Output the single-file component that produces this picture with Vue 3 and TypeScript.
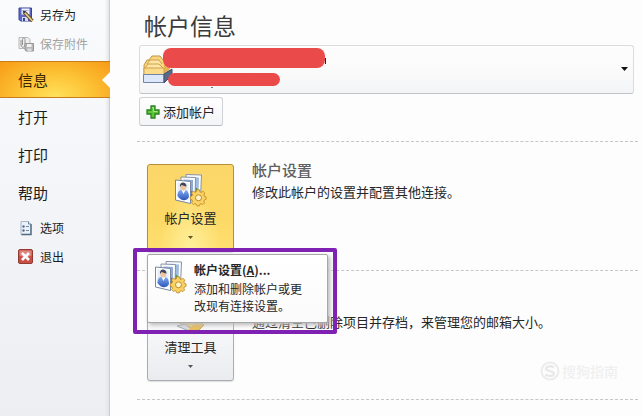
<script setup lang="ts">
import { ref } from 'vue'

type NavItem = { label: string; icon?: 'save' | 'attach' | 'options' | 'exit'; active?: boolean; disabled?: boolean }

const navItems: NavItem[] = [
  { label: '另存为', icon: 'save' },
  { label: '保存附件', icon: 'attach', disabled: true },
  { label: '信息', active: true },
  { label: '打开' },
  { label: '打印' },
  { label: '帮助' },
  { label: '选项', icon: 'options' },
  { label: '退出', icon: 'exit' },
]
const account = ref('primary')
</script>

<template>
  <div class="backstage">
    <nav class="sidebar">
      <button
        v-for="item in navItems"
        :key="item.label"
        type="button"
        class="nav-item"
        :class="{ small: item.icon, active: item.active }"
        :disabled="item.disabled"
      >
        <svg v-if="item.icon === 'save'" class="nav-icon" viewBox="0 0 16 16">
          <path d="M1 1h12.500v13H2.500L1 12.500z" fill="#5d69c4" stroke="#38439a" />
          <path d="M3.500 1.500h8v6h-8z" fill="#f1f4fd" />
          <path d="M4.500 3.500h6M4.500 5.500h5" stroke="#aab4de" />
          <path d="M4 10h6v4H4z" fill="#d5dbf1" />
          <path d="M5 11h2v3H5z" fill="#38439a" />
          <path d="M6 5l8.500 9" stroke="#65502e" stroke-width="3.400" />
          <path d="M6.500 5.500l8 8.500" stroke="#e9cd83" stroke-width="1.700" />
          <path d="M4.500 3.500l3.500 1-2 2z" fill="#33313b" />
        </svg>
        <svg v-else-if="item.icon === 'attach'" class="nav-icon" viewBox="0 0 16 16">
          <path d="M1 1.500h9l2 2v9H1z" fill="#eeeeee" stroke="#b9b9b9" />
          <path d="M3 4v5c0 3 4 3 4 0V3.500C7 1.500 4.500 1.500 4.500 3.500V9" fill="none" stroke="#929292" />
          <path d="M7 7.500h8.500V15H8l-1-1z" fill="#b8b8b8" stroke="#969696" />
          <path d="M9 8h4.500v3H9z" fill="#f2f2f2" />
          <path d="M9.500 12.500h4V15h-4z" fill="#dddddd" />
        </svg>
        <svg v-else-if="item.icon === 'options'" class="nav-icon" viewBox="0 0 16 16">
          <path d="M3 1.500h7.500l2.500 2.500v10.500H3z" fill="#eaf1f8" stroke="#a7b8ca" />
          <path d="M13 4v10.500H3.500" fill="none" stroke="#4f6985" stroke-width="1.400" />
          <path d="M10.500 1.500V4H13" fill="#ffffff" stroke="#6c849c" />
          <circle cx="5.500" cy="6.500" r="1.200" fill="#526d8b" />
          <circle cx="5.500" cy="10.500" r="1.200" fill="#526d8b" />
          <path d="M8 6.500h3M8 10.500h3" stroke="#718aa4" />
        </svg>
        <svg v-else-if="item.icon === 'exit'" class="nav-icon" viewBox="0 0 16 16">
          <rect x="0.500" y="0.500" width="14" height="14" rx="1.500" fill="#c84f44" stroke="#923b34" />
          <path d="M1.500 1.500h12v5q-6 3-12 0z" fill="#df877c" />
          <path d="M4 4l7 7M11 4l-7 7" stroke="#ffffff" stroke-width="2.600" />
        </svg>
        <span>{{ item.label }}</span>
      </button>
    </nav>

    <main class="content">
      <svg class="symbols" aria-hidden="true">
        <defs>
          <linearGradient id="shirt" x1="0" y1="0" x2="0" y2="1">
            <stop offset="0" stop-color="#82aaf0" />
            <stop offset="1" stop-color="#2955b8" />
          </linearGradient>
          <symbol id="contacts" viewBox="0 0 34 34">
            <path d="M12 1.500l15.500.5-1 23-14-2z" fill="#fafcff" stroke="#8793a2" />
            <path d="M14.500 4l10.500.5-.5 17-9-2z" fill="#9fbbe0" />
            <path d="M20 13l6 5-5 5z" fill="#438c48" />
            <path d="M7 4l14.500.5-.5 23L7 25z" fill="#fafcff" stroke="#8793a2" />
            <path d="M9.500 6.500l9.500.5v18l-9-2z" fill="#8dabd6" />
            <path d="M15 16l5 4-4 5z" fill="#c64735" />
            <path d="M1.500 7L16.500 8.500v22L1.500 27z" fill="#ffffff" stroke="#77889f" />
            <path d="M3.500 9.500l11 1v17l-11-3z" fill="#e4edf8" />
            <path d="M3.500 23c0-5 2-6 4-6h3c3 0 4.500 3 4.500 7-3 5-8 4-11.500-1z" fill="url(#shirt)" />
            <path d="M7.500 17l2 4 2-4z" fill="#ffffff" />
            <ellipse cx="9.200" cy="13.800" rx="3" ry="3.800" fill="#edc6a1" />
            <path d="M6 14c-1-6 6.500-6 6.500-.5-2 0-4-1.500-5-1.500z" fill="#40465a" />
            <g stroke="#c08a25" fill="#f9d164">
              <path d="M23 17.500h3l.7 2.500 1.500.7 2.300-1.200 2 2-1.200 2.300.7 1.500 2 .7v3l-2 .7-.7 1.500 1 2-2 2-2.200-1-1.400.6-.7 2-3-.1-.7-2-1.500-.6-2 1-2-2 1-2.100-.6-1.500-2-.7v-3l2-.7.7-1.500-1.200-2.200 2-2 2.200 1.200 1.500-.7z" transform="translate(3.500 2) scale(.84)" />
              <circle cx="24.500" cy="24.800" r="3" fill="#fff5cb" />
            </g>
          </symbol>
        </defs>
      </svg>

      <h1>帐户信息</h1>
      <div class="account-box">
        <select v-model="account" aria-label="帐户信息">
          <option value="primary"></option>
        </select>
        <svg class="account-icon" viewBox="0 0 30 30">
          <path d="M6 5l3-4h8l3 4 5 0v15H1V10l3-5z" fill="#f8d57e" stroke="#c59340" />
          <path d="M4 9l3-4h9l3 4M2 13l3-4h11l4 4" fill="#ffe6a4" stroke="#cda04b" />
          <path d="M21 4l6-1v11l-6 5z" fill="#e6b353" />
          <path d="M1 13h20v7H1z" fill="#fbdc8c" stroke="#d0a04b" />
          <path d="M.5 19.500H21v8H.5z" fill="#dce7f9" stroke="#7184a2" />
          <path d="M21 19l8-5v6l-8 8z" fill="#56698a" stroke="#44536c" />
        </svg>
        <span class="redaction wide"></span>
        <span class="redaction narrow"></span>
        <svg class="arrow" viewBox="0 0 7 4"><path d="M0 0h7L3.500 4z" fill="#111111" /></svg>
      </div>
      <button type="button" class="add-button">
        <svg viewBox="0 0 14 14">
          <path d="M5 1h4v4h4v4H9v4H5V9H1V5h4z" fill="#5cc638" stroke="#2c8023" stroke-width="1.300" />
          <path d="M6 2.500h1.500V6.500h4" fill="none" stroke="#a5e981" />
        </svg>
        <span>添加帐户</span>
      </button>

      <section class="panel">
        <button type="button" class="tile selected">
          <svg class="tile-icon"><use href="#contacts" /></svg>
          <span>帐户设置</span>
          <svg class="tile-arrow" viewBox="0 0 5 3"><path d="M0 0h5L2.500 3z" fill="#665424" /></svg>
        </button>
        <div class="description">
          <h2>帐户设置</h2>
          <p>修改此帐户的设置并配置其他连接。</p>
        </div>
        <div class="highlight">
          <button type="button" class="menu-item">
            <svg class="tile-icon"><use href="#contacts" /></svg>
            <span class="menu-text">
              <strong>帐户设置(<u>A</u>)...</strong>
              <span>添加和删除帐户或更改现有连接设置。</span>
            </span>
          </button>
        </div>
      </section>

      <section class="panel">
        <button type="button" class="tile">
          <svg class="tile-icon" viewBox="0 0 34 34">
            <path d="M6 21l10-8 14 10-9 9z" fill="#f4d177" stroke="#a98a4b" />
            <path d="M3 24l8-2 8 6-4 1z" fill="#d8dbe2" stroke="#a0a7b2" />
            <path d="M14 28l8-8 8 3-9 9z" fill="#eabe59" />
          </svg>
          <span>清理工具</span>
          <svg class="tile-arrow" viewBox="0 0 5 3"><path d="M0 0h5L2.500 3z" fill="#505762" /></svg>
        </button>
        <div class="description cleanup">
          <p>通过清空已删除项目并存档，来管理您的邮箱大小。</p>
        </div>
        <div class="watermark">
          <svg viewBox="0 0 20 20">
            <circle cx="10" cy="10" r="8.500" fill="none" stroke="#ececec" stroke-width="2" />
            <path d="M14 6.500C11 4.500 6 5 6 7.800c0 3 8 1.500 8 4.700 0 3-5.500 3-8.500 1" fill="none" stroke="#e9e9e9" stroke-width="2.400" />
          </svg>
          <span>搜狗指南</span>
        </div>
      </section>
      <div class="panel end"></div>
    </main>
  </div>
</template>

<style>
body {
  margin: 0;
  background: #fdfdfd;
}
</style>

<style scoped>
* {
  box-sizing: border-box;
}
.backstage {
  display: flex;
  min-height: 100vh;
  overflow: hidden;
  font-family: "Noto Sans CJK SC", sans-serif;
  font-size: 13px;
  line-height: 20px;
  color: #262626;
}
button {
  margin: 0;
  padding: 0;
  font: inherit;
  color: inherit;
  border: 0;
  background: none;
}
h1, h2, p {
  margin: 0;
}
svg {
  display: block;
  flex: none;
}
.sidebar {
  display: flex;
  flex: none;
  flex-direction: column;
  width: 110px;
  border-right: 1px solid #c9ccd1;
  background: linear-gradient(90deg, transparent 96%, #e3e5e9), linear-gradient(#fafbfc, #f3f5f8 45%, #eceef1);
}
.nav-item {
  display: flex;
  align-items: center;
  height: 38px;
  padding-left: 18px;
  font-size: 15px;
  color: #1c1c1c;
}
.nav-item.small {
  gap: 6px;
  height: 29px;
  font-size: 12px;
}
.nav-item:not(.small) + .small {
  margin-top: 1px;
}
.nav-item:disabled {
  color: #a3a3a3;
}
.nav-icon {
  width: 16px;
  height: 16px;
}
.nav-item.active {
  position: relative;
  height: 37px;
  margin-top: 3px;
  margin-right: -1px;
  border-top: 1px solid #c97c1b;
  border-bottom: 1px solid #c97c1b;
  background: radial-gradient(ellipse at 50% 100%, #ffe25b, #fdc437 45%, #f79b16 100%);
  color: #3d2500;
}
.nav-item.active::after {
  position: absolute;
  top: 10px;
  right: 0;
  width: 8px;
  height: 16px;
  background: #fdfdfd;
  clip-path: polygon(100% 0, 0 50%, 100% 100%);
  content: "";
}
.content {
  flex: 1;
  min-width: 0;
  padding: 9px 4px 0 27px;
}
.symbols {
  position: absolute;
  width: 0;
  height: 0;
}
h1 {
  margin: 0 0 4px 7px;
  font-size: 23px;
  font-weight: 400;
  line-height: 32px;
  color: #3b3b3b;
}
.account-box {
  position: relative;
  height: 49px;
  margin: 0 4px 3px 2px;
}
.account-box select {
  width: 100%;
  height: 100%;
  border: 1px solid #dadcdf;
  border-bottom-color: #bfc2c7;
  border-radius: 3px;
  appearance: none;
  background: linear-gradient(#fdfdfd, #fafafb 60%, #f2f4f6);
}
.account-icon {
  position: absolute;
  top: 10px;
  left: 4px;
  width: 30px;
  height: 30px;
}
.redaction {
  position: absolute;
  border-radius: 8px;
  background: #eb4a4b;
}
.redaction.wide {
  top: 3px;
  left: 24px;
  width: 162px;
  height: 20px;
}
.redaction.wide::after {
  position: absolute;
  right: -1px;
  bottom: 4px;
  width: 1px;
  height: 6px;
  background: #262626;
  content: "";
}
.redaction.narrow {
  top: 28px;
  left: 29px;
  width: 112px;
  height: 13px;
}
.redaction.narrow::after {
  position: absolute;
  bottom: -2px;
  left: 43px;
  width: 2px;
  height: 1px;
  background: #777777;
  content: "";
}
.arrow {
  position: absolute;
  top: 22px;
  right: 6px;
  width: 7px;
  height: 4px;
}
.add-button {
  display: flex;
  align-items: center;
  gap: 3px;
  height: 29px;
  margin: 0 0 15px 2px;
  padding: 0 7px 0 6px;
  border: 1px solid #cfd1d5;
  border-bottom-color: #b4b8be;
  border-radius: 3px;
  background: linear-gradient(#ffffff, #f3f4f6);
}
.add-button svg {
  width: 14px;
  height: 14px;
}
.panel {
  position: relative;
  display: flex;
  align-items: flex-start;
  gap: 18px;
  height: 129px;
  padding: 22px 0 0 10px;
  border-top: 1px dashed #c6c6c6;
}
.panel.end {
  height: 16px;
  padding: 0;
}
.tile {
  display: flex;
  flex: none;
  flex-direction: column;
  align-items: center;
  width: 87px;
  height: 88px;
  padding-top: 8px;
  border: 1px solid #a9adb4;
  border-radius: 3px;
  background: linear-gradient(#ffffff, #f5f6f8 50%, #e9ebee);
  box-shadow: 0 1px 1px #dddddd;
}
.tile.selected {
  border-color: #b88f36;
  background: radial-gradient(ellipse at 50% 100%, #fff09c, transparent 50%), linear-gradient(#fbd76a, #fcd966 60%, #ffdf70);
}
.tile-icon {
  width: 34px;
  height: 34px;
}
.tile > span {
  margin: 1px 0 8px;
}
.tile-arrow {
  width: 5px;
  height: 3px;
}
.description {
  white-space: nowrap;
}
h2 {
  margin-top: -5px;
  font-size: 15px;
  font-weight: 500;
  line-height: 22px;
  color: #606060;
}
.description p {
  margin-top: 1px;
}
.description.cleanup {
  padding-top: 18px;
}
.highlight {
  position: absolute;
  z-index: 2;
  top: 106px;
  left: -4px;
  width: 204px;
  height: 86px;
  padding: 2px 5px 0 10px;
  border: 4px solid #7f22b4;
  border-radius: 2px;
}
.menu-item {
  display: flex;
  align-items: flex-start;
  gap: 6px;
  width: 181px;
  height: 69px;
  padding: 5px 18px 5px 6px;
  border: 1px solid #a5a7ab;
  border-radius: 2px;
  background: linear-gradient(#ffffff, #fafafa);
  box-shadow: 2px 2px 4px #b9b9b9;
  text-align: left;
}
.menu-text {
  display: flex;
  flex: 1;
  flex-direction: column;
  font-size: 12px;
  line-height: 17px;
}
.menu-text strong {
  line-height: 20px;
}
.watermark {
  position: absolute;
  right: 20px;
  bottom: 18px;
  display: flex;
  align-items: center;
  gap: 2px;
  font-size: 14px;
  font-weight: 500;
  color: #f0f0f0;
}
.watermark svg {
  width: 20px;
  height: 20px;
}
</style>
